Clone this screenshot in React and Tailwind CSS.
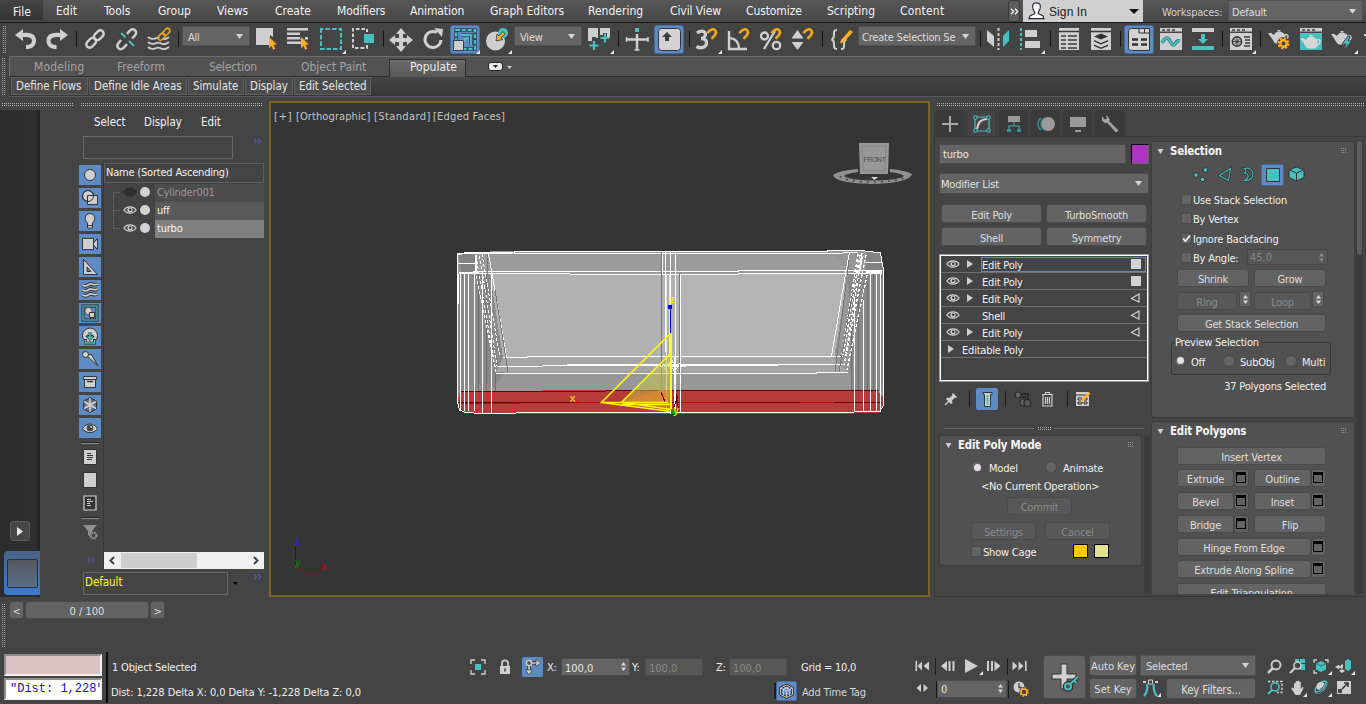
import React from "react";

const L = "#cfcfcf";
const T = "#49c0c0";
const O = "#fdb022";

/* ---------- primitives ---------- */
function Cell({ children, on, fly }) {
  return (
    <div className="flex h-[32px] w-[32px] shrink-0 items-center justify-center">
      <svg width="32" height="32" viewBox="0 0 32 32" fill="none">
        {on && <rect x="1.5" y="1.5" width="29" height="28" rx="2.5" fill="#5f8bc4" stroke="#47699a" />}
        {children}
        {fly && <path d="M31 26v4h-4z" fill="#e6e6e6" />}
      </svg>
    </div>
  );
}

function Ico({ w = 22, h = 20, children }) {
  return (
    <svg className="block shrink-0" width={w} height={h} viewBox={`0 0 ${w} ${h}`} fill="none">
      {children}
    </svg>
  );
}

const Sep = ({ className = "" }) => (
  <div className={"flex h-[32px] shrink-0 " + className}>
    <div className="mt-[7px] h-[16px] w-px bg-[#141414]" />
  </div>
);

const GripH = ({ className = "" }) => (
  <div className={"flex h-[3px] shrink-0 flex-col justify-between " + className}>
    <div className="h-px bg-[linear-gradient(90deg,#b0b0b0_50%,transparent_50%)] bg-[length:2px_1px]" />
    <div className="h-px bg-[linear-gradient(90deg,#b0b0b0_50%,transparent_50%)] bg-[length:2px_1px]" />
  </div>
);

const GripV = ({ className = "" }) => (
  <div className={"flex w-[3px] shrink-0 justify-between " + className}>
    <div className="w-px bg-[linear-gradient(180deg,#a8a8a8_50%,transparent_50%)] bg-[length:1px_2px]" />
    <div className="w-px bg-[linear-gradient(180deg,#a8a8a8_50%,transparent_50%)] bg-[length:1px_2px]" />
  </div>
);

const Down = ({ className = "" }) => (
  <svg className={"shrink-0 " + className} width="7" height="5" viewBox="0 0 7 5">
    <path d="M0 0h7L3.5 5z" fill="#d4d4d4" />
  </svg>
);

const Drop = ({ className = "", children }) => (
  <div className={"flex shrink-0 items-center justify-between border border-[#505050] bg-[#646464] text-[#dcdcdc] " + className}>
    <span className="pt-[2px]">{children}</span>
    <Down />
  </div>
);

const Btn = ({ className = "", off, tall, children }) => (
  <div
    className={
      "flex shrink-0 items-start justify-center rounded-[3px] border " +
      (tall ? "pt-[5px] " : "pt-[4px] ") +
      (off ? "border-[#4a4a4a] bg-[#585858] text-[#8a8a8a] " : "border-[#4a4a4a] bg-[#636363] text-[#dedede] ") +
      className
    }
  >
    {children}
  </div>
);

const Eye = ({ dim }) => (
  <svg className="shrink-0" width="14" height="10" viewBox="0 0 14 10" fill="none">
    {dim ? (
      <path d="M0 5C3-1 11-1 14 5 11 11 3 11 0 5z" fill="#2f2f2f" />
    ) : (
      <>
        <path d="M1 5C3.6 0.8 10.4 0.8 13 5 10.4 9.2 3.6 9.2 1 5z" stroke={L} strokeWidth="1.4" />
        <circle cx="7" cy="5" r="2.6" fill={L} />
        <circle cx="7.2" cy="4.8" r="1.2" fill="#333" />
      </>
    )}
  </svg>
);

const Spin = ({ dim }) => (
  <svg className="shrink-0" width="5" height="9" viewBox="0 0 5 9">
    <path d="M0 3.5L2.5 0 5 3.5zM0 5.5L2.5 9 5 5.5z" fill={dim ? "#8c8c8c" : "#dadada"} />
  </svg>
);

const Check = ({ on }) => (
  <div className="h-[11px] w-[11px] shrink-0 border border-[#4b4b4b] bg-[#636363]">
    {on && (
      <svg className="block" width="9" height="9" viewBox="0 0 9 9" fill="none">
        <path d="M1.2 4.5l2.2 2.7L8 1.6" stroke="#ededed" strokeWidth="1.8" />
      </svg>
    )}
  </div>
);

const Radio = ({ on }) => (
  <div className="flex h-[12px] w-[12px] shrink-0 items-center justify-center rounded-full border border-[#4a4a4a] bg-[#636363]">
    {on && <div className="h-[7px] w-[7px] rounded-full bg-[#e2e2e2]" />}
  </div>
);

const Opt = () => (
  <div className="flex h-[18px] w-[15px] shrink-0 items-center justify-center rounded-[3px] border border-[#4a4a4a] bg-[#636363]">
    <div className="mb-px ml-[-1px] h-[11px] w-[10px] border border-t-[3px] border-black" />
  </div>
);

const More = ({ className = "" }) => (
  <svg className={"shrink-0 " + className} width="9" height="6" viewBox="0 0 9 6" fill="none">
    <path d="M1 .5L3.5 3 1 5.5M5 .5L7.5 3 5 5.5" stroke="#57579a" strokeWidth="1.2" />
  </svg>
);

const Head = ({ children }) => (
  <div className="flex h-[20px] shrink-0 items-center pr-[7px]">
    <svg className="mr-[6px] mb-[2px] ml-[5px]" width="7" height="5" viewBox="0 0 7 5">
      <path d="M0.5 0h6L3.5 5z" fill="#cfcfcf" />
    </svg>
    <span className="flex-1 text-[11.4px] font-bold text-[#f4f4f4]">{children}</span>
    <svg className="mb-[4px]" width="6" height="5" viewBox="0 0 6 5" fill="#8e8e8e">
      <path d="M0 0h1v1H0zM2 0h1v1H2zM4 0h1v1H4zM0 2h1v1H0zM2 2h1v1H2zM4 2h1v1H4zM0 4h1v1H0zM2 4h1v1H2zM4 4h1v1H4z" />
    </svg>
  </div>
);

/* ---------- shared icon parts ---------- */
const Magnet = ({ x = 0, y = 0 }) => (
  <path transform={`translate(${x} ${y})`} d="M1.5 4.2C4-.2 8.200-.5 9.500 1.600 11 4.300 9 6.500 5.500 9.800" stroke="#f3a81c" strokeWidth="2.600" />
);
const Cursor = ({ x, y }) => (
  <path transform={`translate(${x} ${y})`} d="M0 0l8 7.500-3.600.3 1.900 4-2 .9-1.800-4L0 11.200z" fill={O} />
);
const Pot = ({ x = 0, y = 0, fill = L }) => (
  <g transform={`translate(${x} ${y})`}>
    <path d="M8 3.500c1-1 5-1 6.500 0l2 1.500c2 3 1.500 7-1 9.500h-8C5.500 13 4 9 1 5.500L0 4h3.500l2 2z" fill={fill} />
    <path d="M9.500 2.500h3v-1.500h-3z" fill={fill} />
    <path d="M16.500 6c4-2 5.500 3-.5 6" stroke={fill} strokeWidth="1.500" />
  </g>
);

/* ---------- menu bar ---------- */
function MenuBar() {
  return (
    <div className="flex h-[23px] shrink-0 border-b border-[#161616] bg-[linear-gradient(#575757,#474747)] text-[12px] text-[#f2f2f2]">
      <div className="h-[20px] w-[43px] bg-[linear-gradient(#454545,#343434)] pt-[6px] pl-[13px] tracking-normal">File</div>
      <div className="flex w-[965px] pt-[5px] pl-[13px] tracking-normal">
        <span className="w-[48px]">Edit</span>
        <span className="w-[54px]">Tools</span>
        <span className="w-[59px]">Group</span>
        <span className="w-[58px]">Views</span>
        <span className="w-[62px]">Create</span>
        <span className="w-[73px] tracking-[-.1px]">Modifiers</span>
        <span className="w-[80px] tracking-[-.1px]">Animation</span>
        <span className="w-[98px]">Graph Editors</span>
        <span className="w-[82px]">Rendering</span>
        <span className="w-[76px] tracking-[-.1px]">Civil View</span>
        <span className="w-[81px] tracking-[-.1px]">Customize</span>
        <span className="w-[73px]">Scripting</span>
        <span className="tracking-[.2px]">Content</span>
      </div>
      <div className="flex h-[22px] w-[12px] items-center justify-center rounded-[3px] border border-[#3a3a3a] bg-[#5c5c5c]">
        <svg width="9" height="7" viewBox="0 0 9 7" fill="none">
          <path d="M1 .7L3.600 3.500 1 6.300M5 .7L7.600 3.500 5 6.300" stroke="#fff" strokeWidth="1.300" />
        </svg>
      </div>
      <div className="ml-[3px] flex h-[22px] w-[120px] items-center bg-[#d0d0d0] font-['Liberation_Sans',sans-serif] text-[12px] tracking-[.1px] text-[#202020]">
        <svg className="ml-[5px]" width="17" height="18" viewBox="0 0 17 18">
          <path d="M5 2.500C6 .4 11 .4 12 2.500 12.800 5 12 8 10.300 10.200v1.500l4.500 2 1.200 3H1l1.200-3 4.500-2v-1.500C5 8 4.200 5 5 2.500z" fill="#fff" stroke="#26263a" strokeWidth="1.200" />
        </svg>
        <span className="ml-[4px] flex-1 pt-px">Sign In</span>
        <svg className="mr-[4px]" width="10" height="5" viewBox="0 0 10 5"><path d="M0 0h10L5 5z" fill="#111" /></svg>
      </div>
      <div className="flex-1 pt-[7px] pl-[19px] text-[11px] text-[#d0d0d0]">Workspaces:</div>
      <Drop className="mr-[3px] h-[21px] w-[135px] pt-px pr-[6px] pl-[3px] text-[11px]">Default</Drop>
    </div>
  );
}

/* ---------- main toolbar ---------- */
function Toolbar() {
  return (
    <div className="flex h-[33px] shrink-0 items-start bg-[#444] pt-px">
      <GripV className="mt-[2px] ml-[3px] h-[27px]" />
      <div className="w-[4px]" />
      <Cell><path d="M5 11L13 5v4c9-1 13 2 13 7.500 0 6-4 8.500-10 8.500v-4c4 0 6-1.500 6-4.300 0-3-3-4-9-3.700V17z" fill={L} /></Cell>
      <Cell><path d="M26 11L18 5v4C9 8 4.500 11 4.500 16.500c0 6 4 8.500 10 8.500v-4c-4 0-6-1.500-6-4.300 0-3 3.500-4 9.500-3.700V17z" fill={L} /></Cell>
      <Sep className="w-[5px] pl-[2px]" />
      <Cell>
        <g stroke={L} strokeWidth="2.400">
          <rect x="-5.500" y="-3.400" width="11" height="6.800" rx="3.400" transform="translate(19.800 11.200) rotate(-45)" />
          <rect x="-5.500" y="-3.400" width="11" height="6.800" rx="3.400" transform="translate(12.200 18.800) rotate(-45)" />
        </g>
      </Cell>
      <Cell>
        <g stroke={L} strokeWidth="2.400">
          <path d="M16 10l3-3.500c4-3 8 1 5 5L21 14.500M16 20l-3.500 4c-4 3-8-1-5-5L10 16" />
        </g>
        <path d="M10 9l4.500 4.500M18 17l5 5" stroke={T} strokeWidth="2" />
      </Cell>
      <Cell>
        <path d="M5 13c5 5 8-1 12 1s6 1 9-1M5 18c5 5 8-1 12 1s6 1 9-1M5 23c5 5 8-1 12 1s6 1 9-1" stroke={L} strokeWidth="1.900" />
        <g stroke="#444" strokeWidth="4"><path d="M17 16l9-10" /></g>
        <g stroke="#e7a02a" strokeWidth="1.700">
          <rect x="-3.800" y="-2.400" width="7.600" height="4.800" rx="2.400" transform="translate(23.500 7.800) rotate(-45)" />
          <rect x="-3.800" y="-2.400" width="7.600" height="4.800" rx="2.400" transform="translate(18.500 12.800) rotate(-45)" />
        </g>
      </Cell>
      <Sep className="w-[7px] pl-[3px]" />
      <Drop className="mt-[2px] h-[20px] w-[68px] pr-[6px] pl-[5px]">All</Drop>
      <div className="w-px" />
      <Cell><path d="M5 4h17v9l-3-2v10H5z" fill={L} /><Cursor x={18} y={13} /></Cell>
      <Cell>
        <path d="M4 4h21v2.500H4zM4 8.500h13v2.500H4zM4 13h21v2.500H4zM4 17.500h15v2.500H4z" fill={L} />
        <path d="M17 12h5v3h-5z" fill="#444" /><Cursor x={18} y={13} />
      </Cell>
      <Cell fly><rect x="6" y="5" width="20" height="20" stroke={T} strokeWidth="2" strokeDasharray="4.500 2" strokeDashoffset="2" /></Cell>
      <Cell>
        <path d="M17 24H6V5h14v3M20 21v3h-3" stroke={L} strokeWidth="2" strokeDasharray="3.500 2" />
        <path d="M17 10h10v9H17z" fill={T} />
      </Cell>
      <Sep className="w-[6px] pl-[4px]" />
      <Cell><path d="M16 4l5 6h-3v4h4v-3l6 5-6 5v-3h-4v4h3l-5 6-5-6h3v-4h-4v3l-6-5 6-5v3h4v-4h-3z" fill={L} /></Cell>
      <Cell><path d="M20 8.500A8 8 0 1 0 24 16" stroke={L} strokeWidth="3" /><path d="M17 4l9 1-1 8z" fill={L} /></Cell>
      <Cell on fly>
        <rect x="7" y="6" width="19" height="19" stroke="#31425a" strokeWidth="3.500" />
        <rect x="7" y="6" width="19" height="19" stroke={T} strokeWidth="2" strokeDasharray="4 1.800" />
        <path d="M12 11h10v10" stroke="#31425a" strokeWidth="3.500" /><path d="M12 11h10v10" stroke={T} strokeWidth="1.800" />
        <path d="M4.500 16.500h10v10h-10z" fill={L} stroke="#2d3b50" />
        <path d="M15 17l4-4" stroke={T} strokeWidth="2" />
      </Cell>
      <Cell fly>
        <circle cx="14.500" cy="17" r="9.500" fill={L} /><circle cx="22" cy="9" r="5" fill={T} />
        <path d="M22 7.500l-4 4.500-2-2-1 7 7-1.500-2-1.500 4-4z" fill={O} stroke="#333" strokeWidth=".8" />
      </Cell>
      <div className="w-px" />
      <Drop className="mt-[2px] h-[20px] w-[68px] pr-[6px] pl-[5px]">View</Drop>
      <div className="w-px" />
      <Cell fly>
        <path d="M5 4h10v10h-2v-1h-4v4H5zM17 4h10v9h-3V9h-4v2h-3z" fill={L} />
        <path d="M11 17v9M6.500 21.500h9M22 9.500v9M17.500 14h9" stroke={T} strokeWidth="2.200" />
      </Cell>
      <Sep className="w-[6px] pl-[3px]" />
      <Cell>
        <path d="M16 10v16M5 15.500h22" stroke={L} strokeWidth="2.400" /><path d="M5.500 13v5M27 13v5M13.500 26h5" stroke={L} strokeWidth="1.500" />
        <path d="M14 4h4v4h-4z" fill={T} />
      </Cell>
      <Cell on>
        <rect x="5.500" y="4.500" width="22" height="22" rx="3" fill="#d3d3d3" stroke="#2c3544" />
        <path d="M14 8l5 5h-3v4h-4v-4H9z" fill="#3c3c3c" />
      </Cell>
      <Sep className="w-[6px] pl-[4px]" />
      <Cell fly>
        <path d="M6 9c5-4 10-1 8 3-.6 1.500-2 2.500-4 2.500 4 0 6 2 5.500 5-.6 4-6 5.500-10 3" stroke={L} strokeWidth="3.300" />
        <Magnet x={15} y={5} />
      </Cell>
      <Cell>
        <path d="M6 7v18h18" stroke={L} strokeWidth="2.400" /><path d="M6 14c6 0 10 4 10 11" stroke={L} strokeWidth="2.200" /><Magnet x={15} y={5} />
      </Cell>
      <Cell>
        <circle cx="9.500" cy="12" r="3.500" stroke={L} strokeWidth="2.300" /><circle cx="21.500" cy="21.500" r="3.700" stroke={L} strokeWidth="2.300" />
        <path d="M9 25L20 7" stroke={L} strokeWidth="2.300" /><Magnet x={15} y={5} />
      </Cell>
      <Cell><path d="M10.500 6l6 8.500H4.500zM4.500 18h12l-6 8z" fill={L} /><Magnet x={15} y={5} /></Cell>
      <Sep className="w-[7px] pl-[3px]" />
      <Cell>
        <path d="M11 6C7.500 6 8 8 8 11s-.5 4-2.500 4.500C7.500 16 8 17.500 8 20s-.5 5 3 5M15 25c3.500 0 3-2 3-5s.5-4 2.500-4.500" stroke={L} strokeWidth="2" />
        <path d="M15 16l9-10 3 2-9 10-4 1.500z" fill={O} />
      </Cell>
      <Drop className="mt-[2px] h-[20px] w-[118px] pr-[6px] pl-[3px]">Create Selection Se</Drop>
      <Sep className="w-[6px] pl-[4px]" />
      <Cell>
        <path d="M5 6l7 6v11l-7-6z" fill={L} /><path d="M27 6l-6 6v11l6-6z" fill={T} /><path d="M16.500 4v22" stroke={L} strokeWidth="2" strokeDasharray="3 2" />
      </Cell>
      <Cell fly>
        <path d="M7 4v22" stroke={T} strokeWidth="2" strokeDasharray="3 2" /><path d="M11 6h12v7H11zM11 17h15v7H11z" fill={L} />
      </Cell>
      <Sep className="w-[7px] pl-[4px]" />
      <Cell>
        <path d="M6 4h20v22H6z" fill={L} />
        <path d="M6 7.500h20M8 12h5M15 12h9M8 16h5M15 16h9M8 20h5M15 20h9M8 24h5M15 24h9" stroke="#3a3a3a" strokeWidth="1.600" />
      </Cell>
      <Cell>
        <path d="M6 4h20v22H6z" fill={L} /><path d="M6 7.500h20" stroke="#3a3a3a" strokeWidth="1.600" />
        <path d="M16 9.500l7 3-7 3-7-3zM9 16l7 3 7-3v1.500l-7 3-7-3zM9 20.500l7 3 7-3V22l-7 3-7-3z" fill="#333" />
      </Cell>
      <Sep className="w-[6px] pl-[3px]" />
      <Cell on>
        <path d="M5.500 8c0-2 1-3.500 3-3.500h18v22H8.500c-2 0-3-1-3-3z" fill="#d3d3d3" stroke="#333" />
        <path d="M16 5v4h11M21.500 5v4" stroke="#333" /><path d="M9 15.500h6M18 15.500h6M9 20.500h6M18 20.500h6" stroke="#333" strokeWidth="2.600" />
      </Cell>
      <Cell>
        <path d="M5 4h22v3.500H5zM5 9h22v17H5z" fill={L} /><path d="M7 6h3M12 6h3M17 6h3" stroke="#3a3a3a" strokeWidth="1.600" />
        <path d="M7 19c3-6 6-6 8-2s4 5 5 3 2-4 5-3" stroke="#2d7f80" strokeWidth="3.400" /><path d="M7 19c3-6 6-6 8-2s4 5 5 3 2-4 5-3" stroke={T} strokeWidth="1.800" />
      </Cell>
      <Cell>
        <path d="M5 4h22v4H5z" fill={L} /><path d="M5 22h22v4H5zM14 10h4v5h3l-5 5-5-5h3z" fill={T} />
      </Cell>
      <Sep className="w-[6px] pl-[3px]" />
      <Cell fly>
        <path d="M5 4h22v3.500H5zM5 9h22v17H5z" fill={L} /><path d="M7 6h3M12 6h3M17 6h3M19 13h6M20 16h5M20 19h5M19 22h6" stroke="#3a3a3a" strokeWidth="1.600" />
        <circle cx="12" cy="17.500" r="4.600" stroke="#3a3a3a" strokeWidth="1.600" /><path d="M9 14.500l6 6M15 14.500l-6 6M12 13v9M7.500 17.500h9" stroke="#3a3a3a" />
      </Cell>
      <Sep className="w-[6px] pl-[3px]" />
      <Cell>
        <Pot x={5} y={5} />
        <circle cx="20.500" cy="19.500" r="6.500" fill="#444" /><circle cx="20.500" cy="19.500" r="5" stroke={O} strokeWidth="2" strokeDasharray="2.200 1.700" /><circle cx="20.500" cy="19.500" r="3.200" stroke={O} strokeWidth="2.400" />
      </Cell>
      <Cell><path d="M5 4h22v3.500H5z" fill={L} /><path d="M7 6h3M12 6h3M17 6h3" stroke="#3a3a3a" strokeWidth="1.600" /><path d="M5 9h22v17H5z" fill={T} /><Pot x={5} y={10} fill="#d6d6d6" /></Cell>
      <Cell fly><Pot x={4} y={6} /><path d="M21 12l-6 8h4l-2 6 8-9h-4l2-5z" fill={T} stroke="#444" /></Cell>
      <div className="mt-[10px] ml-[5px] h-[2px] w-[2px] bg-[#cfcfcf]" />
    </div>
  );
}

/* ---------- ribbon ---------- */
function Ribbon() {
  const b = "flex h-[18px] items-center border border-[#5e5e5e] bg-[#4b4b4b] pt-px text-[#e6e6e6] ";
  return (
    <div className="flex h-[44px] shrink-0 bg-[#444] tracking-normal">
      <GripV className="mt-[2px] ml-[2px] h-[37px]" />
      <div className="ml-[4px] flex flex-1 flex-col">
        <div className="flex h-[21px] border-t border-l border-[#6c6c6c] bg-[#525252] text-[12px] text-[#a2a2a2]">
          <div className="flex flex-1 border-b border-[#2c2c2c]">
            <div className="flex w-[379px] pt-[4px] pl-[24px]">
              <span className="w-[83px] tracking-[.15px]">Modeling</span>
              <span className="w-[92px]">Freeform</span>
              <span className="w-[92px] tracking-[-.2px]">Selection</span>
              <span>Object Paint</span>
            </div>
            <div className="mt-[2px] -mb-px w-[77px] border border-b-0 border-[#2f2f2f] bg-[linear-gradient(#6b6b6b,#575757)] pt-px pl-[20px] text-[#ececec]">Populate</div>
            <div className="mt-[5px] ml-[22px] flex h-[9px] w-[15px] items-center justify-center rounded-[3px] border border-[#222] bg-[#e8e8ee]">
              <svg width="5" height="3" viewBox="0 0 5 3"><path d="M0 0h5L2.500 3z" fill="#222" /></svg>
            </div>
            <svg className="mt-[9px] ml-[4px]" width="5" height="3" viewBox="0 0 5 3"><path d="M0 0h5L2.500 3z" fill="#ccc" /></svg>
          </div>
        </div>
        <div className="flex h-[20px] gap-px border-b border-[#5a5a5a] bg-[linear-gradient(#464646,#363636)] pl-[2px] text-[11.4px]">
          <div className={b + "w-[77px] pl-[4px]"}>Define Flows</div>
          <div className={b + "w-[98px] pl-[4px]"}>Define Idle Areas</div>
          <div className={b + "w-[56px] pl-[4px]"}>Simulate</div>
          <div className={b + "w-[48px] pl-[4px]"}>Display</div>
          <div className={b + "w-[77px] pl-[4px]"}>Edit Selected</div>
        </div>
      </div>
    </div>
  );
}

/* ---------- scene explorer ---------- */
const S = "#333";
const filters = [
  <circle cx="11" cy="10" r="5.500" fill={L} stroke={S} />,
  <g stroke={S}><circle cx="9" cy="8" r="5.500" fill={L} /><path d="M8.500 7.500h10v9h-10z" fill={L} /><circle cx="9" cy="8" r="5.500" /></g>,
  <path d="M8.500 12C5 9 5.500 3 11 2.500c5.500.5 6 6.500 2.500 9.500v5h-5zM8.500 14.500h5" fill={L} stroke={S} />,
  <path d="M3.500 4.500h11v11h-11zM14.500 9l4-4.500v11l-4-4.500z" fill={L} stroke={S} />,
  <g><path d="M4.500 2.500v15h14z" fill={L} stroke={S} /><path d="M8 10v4.500h4z" fill="#5f8bc4" stroke={S} /></g>,
  <g><path d="M3.500 5c5 3 6-2 9-1s4 1 6 0M3.500 10c5 3 6-2 9-1s4 1 6 0M3.500 15c5 3 6-2 9-1s4 1 6 0" stroke={S} strokeWidth="3.600" /><path d="M3.500 5c5 3 6-2 9-1s4 1 6 0M3.500 10c5 3 6-2 9-1s4 1 6 0M3.500 15c5 3 6-2 9-1s4 1 6 0" stroke={L} strokeWidth="1.800" /></g>,
  <g><rect x="4" y="3" width="14" height="14" fill="#5f8bc4" stroke={S} strokeWidth="3.200" /><rect x="4" y="3" width="14" height="14" stroke={T} strokeWidth="1.200" /><circle cx="9.500" cy="8" r="3.700" fill={L} stroke={S} strokeWidth=".8" /><path d="M10.500 9.500h5v5h-5z" fill={L} stroke={S} /></g>,
  <g><circle cx="11" cy="9.500" r="7.500" fill={L} stroke={S} /><path d="M11 6v6M7.500 9.500L11 13l3.500-3.500M6.500 13v4h9v-4" stroke={S} strokeWidth="3" /><path d="M11 6v6M8.500 10.500L11 13l2.500-2.500M6.500 14v3h9v-3" stroke={T} strokeWidth="1.600" /></g>,
  <g fill={L} stroke={S}><path d="M8 7l4-2 7 12z" /><circle cx="6.500" cy="5.500" r="3" /></g>,
  <g fill={L} stroke={S}><path d="M5.500 7.500h11v8h-11zM4.500 4.500h13v3h-13z" /><path d="M8 9.500h6" strokeWidth="1.500" /></g>,
  <g><path d="M11 2.500l6.500 3.700v7.600L11 17.500l-6.500-3.700V6.200z" stroke={S} fill="#5c6c82" /><path d="M11 3v14M5 6.500l12 7M17 6.500l-12 7" stroke={L} strokeWidth="1.500" /><circle cx="11" cy="10" r="3.400" stroke={L} strokeDasharray="2 1.500" /></g>,
  <g><path d="M3.500 10.500c4-6 11-6 15 0-4 5.500-11 5.500-15 0z" fill={L} stroke={S} /><circle cx="11" cy="10" r="3.300" fill="#444" /><circle cx="12" cy="9" r="1" fill={L} /></g>,
];

function Explorer() {
  return (
    <div className="flex h-[487px] w-[185px] flex-col text-[#f2f2f2]">
      <div className="flex h-[26px] pt-[7px] pl-[15px] text-[11.4px] tracking-normal">
        <span className="w-[50px]">Select</span>
        <span className="w-[57px]">Display</span>
        <span>Edit</span>
      </div>
      <div className="flex h-[26px] pl-[4px]">
        <div className="h-[23px] w-[150px] border border-[#686868]" />
        <More className="mt-[2px] ml-[20px]" />
      </div>
      <div className="flex h-[408px]">
        <div className="flex w-[24px] flex-col">
          <div className="mt-[3px] flex flex-col gap-[3px]">
            {filters.map((f, i) => (
              <div key={i} className="h-[20px] w-[22px] bg-[#5f8bc4]"><Ico>{f}</Ico></div>
            ))}
          </div>
          <div className="mt-[4px] ml-[2px] h-[2px] w-[18px] border-t border-[#262626] bg-[#8a8a8a]" />
          <div className="mt-[3px] flex flex-col gap-[3px]">
            <Ico><path d="M4.500 2.500h13v15h-13z" fill={L} stroke={S} /><path d="M8 6.500h4M8 8.500h6M8 10.500h6M8 12.500h5" stroke={S} /></Ico>
            <Ico><path d="M4.500 2.500h13v15h-13z" fill={L} stroke={S} /></Ico>
            <Ico><path d="M5 3h12v14H5z" fill={S} stroke={L} strokeWidth="1.200" /><path d="M8 6.500h4M8 8.500h6M8 10.500h3M8 12.500h4" stroke={L} /></Ico>
          </div>
          <div className="mt-[4px] ml-[2px] h-[2px] w-[18px] border-t border-[#262626] bg-[#8a8a8a]" />
          <div className="mt-[3px]">
            <Ico><path d="M4 3h14l-5 6v7l-4-3V9z" fill="#8f8f8f" /><circle cx="14.500" cy="13.500" r="3" fill="#444" stroke="#8f8f8f" strokeWidth="2" strokeDasharray="1.600 .8" /><circle cx="14.500" cy="13.500" r="2.300" fill="#444" stroke="#8f8f8f" /></Ico>
          </div>
          <More className="mt-[15px] ml-[8px]" />
        </div>
        <div className="flex w-[161px] flex-col border-l border-[#383838]">
          <div className="mt-px flex h-[20px] items-start border border-[#5c5c5c] pt-[3px] pl-px text-[#f2f2f2]">Name (Sorted Ascending)</div>
          <div className="flex h-[369px]">
            <div className="flex w-[51px] shrink-0">
              <svg width="16" height="60" viewBox="0 0 16 60" fill="none"><path d="M9.500 10v36M9.500 9.500h7M9.500 27.500h7M9.500 45.500h7" stroke="#777" strokeDasharray="1 1" /></svg>
              <div className="flex flex-col">
                {[1, 0, 0].map((d, i) => (
                  <div key={i} className="flex h-[18px] items-center gap-[3px] pl-[3px]">
                    <Eye dim={!!d} />
                    <div className="h-[10px] w-[10px] rounded-full bg-[#d2d2d2]" />
                  </div>
                ))}
              </div>
            </div>
            <div className="flex flex-1 flex-col pt-px">
              <div className="h-[18px] bg-[#4d4d4d] pt-[3px] pl-[2px] text-[#959595]">Cylinder001</div>
              <div className="h-[18px] bg-[#5a5a5a] pt-[3px] pl-[2px]">uff</div>
              <div className="h-[18px] bg-[#808080] pt-[3px] pl-[2px]">turbo</div>
            </div>
          </div>
          <div className="flex h-[17px] items-center bg-[#f0f0f0]">
            <svg width="17" height="17" viewBox="0 0 17 17" fill="none"><path d="M10 5L6.500 8.500 10 12" stroke="#444" strokeWidth="2" /></svg>
            <div className="h-[15px] w-[76px] bg-[#cdcdcd]" />
            <div className="flex-1" />
            <svg width="17" height="17" viewBox="0 0 17 17" fill="none"><path d="M7 5l3.500 3.500L7 12" stroke="#444" strokeWidth="2" /></svg>
          </div>
        </div>
      </div>
      <div className="flex h-[27px] pt-[2px] pl-[4px]">
        <div className="h-[23px] w-[145px] border border-[#686868] pt-[4px] pl-px text-[11.4px] tracking-normal text-[#ffff10]">Default</div>
        <svg className="mt-[10px] ml-[5px]" width="5" height="3" viewBox="0 0 5 3"><path d="M0 0h5L2.500 3z" fill="#000" /></svg>
        <More className="mt-[2px] ml-[15px]" />
      </div>
    </div>
  );
}

/* ---------- viewport ---------- */
function Scene() {
  const leftX = [460.5, 464.5, 468.5, 474.5, 482.5, 491.5];
  const rightX = [854.5, 863.5, 870.5, 876.5, 880.5];
  return (
    <svg width="657" height="492" viewBox="271 103 657 492" fill="none" shapeRendering="crispEdges">
      <path d="M458 254l9-2 47-1h316l30-1 19 2 4 20v134l-5 6-50 1H516l-50-1-8-8z" fill="#979797" />
      <path d="M514 252h318l15 20-370 1-2-20z" fill="#9b9b9b" />
      <path d="M458 274h35l12 98-13 18h-34z" fill="#8a8a8a" />
      <path d="M848 274h35v116h-32z" fill="#8a8a8a" />
      <path d="M490 274h358l-14 84H503z" fill="#b1b1b1" />
      <path d="M676 274h172l-14 84H676z" fill="#b4b4b4" />
      <path d="M503 358h331l13 14H496z" fill="#a6a6a6" />
      <path d="M459 254h17v19h-15z" fill="#828282" /><path d="M866 252h14l3 18h-17z" fill="#828282" />
      <path d="M478 391V274M486.500 391V274M495 391V370M851 391V330M858 391V300M867 391V274M873 391V274" stroke="#707070" />
      <path d="M478 391h-18l-2 8 2 8 5 6 50 1h314l50-1 4-8v-9l-6-5-50-1H606z" fill="#b83b3b" />
      <path d="M460 392l30-1h116l1-1h246l26 1" stroke="#6d0000" />
      <path d="M458 402.500h424" stroke="#6d0000" /><path d="M460 403h60M576 402.500h25M720 402.500h-40M800 402.500h34" stroke="#c00808" />
      <g stroke="#fff">
        {leftX.map((x) => <path key={x} d={`M${x} 274v${x > 480 ? 139 : 137}`} />)}
        {rightX.map((x) => <path key={x} d={`M${x} ${x > 870 ? 274 : 300}V412`} />)}
        <path d="M457.500 254v148l2 8 6 2.500 17 1h33l1-1h313l50-1 4-6V270l-3-17-20-2.500h-33v1H514v1h-47z" />
        <path d="M458 254.500l8-1 48-.5M514 253.500h314l30-1M473 271.500h265v-1h144M470 273.500l200 1h68v-1h144" />
        <path d="M458 263.500h18M866 262.500h16" />
        <path d="M459 272.500h20M866 271.500h16" strokeWidth="2" />
        <path d="M503 357.500h24v-1h316" /><path d="M497 367l70-1.500 100-1h112l64 .5" /><path d="M567 365h211" strokeWidth="1.500" />
        <path d="M495.500 373.500h321v-1h31" />
        <path d="M488.500 254l4 22 14 81M849.500 252l-4 22-14 82" />
        <path d="M662.500 252v22M665.500 252v100M670.500 252v162M675.500 252v162M680.500 274v139M674.500 356v57" />
        <path d="M669.500 274v80M666.500 274v139" stroke="#e6e6e6" />
      </g>
      <g stroke="#fff" strokeDasharray="3 2">
        <path d="M479 256l4 20 14 90M482 254l18 104M476 256l20 117M476 276l20 95" /><path d="M862 253l-16 100M860 255l-17 100M866 255l-22 110M858 254l-16 100M868 270l-21 100" strokeWidth="1.500" />
      </g>
      <path d="M487 254v20M495 290l13 82M661.500 252v140M679.500 274v100M849 260l-14 112M853 290l-14 82" stroke="#777" />
      <path d="M476 255v18M862 256l-3 18M458 274v30" stroke="#fff" strokeWidth="2" />
      <path d="M660 366h26M665 370l4-8 6 10M672 360l4 10 4-8M662 373h20" stroke="#fff" strokeDasharray="3 1" />
      <path d="M622 402l48-45v46z" fill="#c9c94a" opacity=".5" /><path d="M622 402l38-12h11v19z" fill="#e18a28" opacity=".65" />
      <path d="M661 392l4 10M676 394l3 18M678 396l-5 14" stroke="#6d0000" />
      <path d="M670.500 307v26" stroke="#0000d0" /><path d="M668 305h4v4h-4z" fill="#0000d0" />
      <path d="M670.500 333.500l-69 69 70 9M670.500 353.500l-49 49 50 7M602 402.500h66M622 404.500h48" stroke="#ff0" strokeWidth="1.500" shapeRendering="auto" />
      <path d="M671 334v76" stroke="#ff0" strokeWidth="2" />
      <path d="M575 401h2v2h-2z" fill="#d00" /><path d="M671 409h5v5h-5z" fill="#0a9a0a" />
      <g shapeRendering="auto" fontFamily="Liberation Sans, sans-serif" fontSize="11" fontWeight="bold">
        <text x="569.500" y="402" fill="#e0c800">x</text><text x="669.500" y="303" fill="#f2f200">z</text><text x="673" y="414" fill="#c8d800">y</text>
      </g>
      {/* world axis tripod */}
      <path d="M295.500 546v24" stroke="#1010a0" /><path d="M296 569.500h26" stroke="#7a1010" /><path d="M295 565h2v4h-2z" fill="#0d6a0d" />
      <g shapeRendering="auto" fontFamily="Liberation Sans, sans-serif" fontSize="10" fontWeight="bold">
        <text x="295" y="545" fill="#2424e0">z</text><text x="321" y="570" fill="#a81010">x</text><text x="295" y="566" fill="#107010">y</text>
      </g>
      {/* view cube */}
      <g shapeRendering="auto">
        <path d="M833 175a39 9 0 0 1 25-6v3a33 6 0 0 0-14 4c6 6 54 6 60 0a33 6 0 0 0-14-4v-3a39 9 0 0 1 22 5c-2 13-77 13-79 1z" fill="#9b9b9b" opacity=".9" />
        <path d="M840 176c4 8 62 8 66 0" stroke="#454545" strokeWidth="1.500" strokeDasharray="2 5" />
        <path d="M859 143h30l-1 31h-28z" fill="#989898" /><path d="M862 146h24l-1 25h-22z" stroke="#868686" />
        <path d="M871 177h7l-3.500 3z" fill="#ddd" />
        <text x="863.500" y="161.500" fontSize="7" fontFamily="Liberation Sans, sans-serif" fill="#505050" textLength="22">FRONT</text>
      </g>
    </svg>
  );
}

function Viewport() {
  return (
    <div className="relative mt-px ml-px h-[496px] w-[661px] shrink-0 border-2 border-[#7c6420] bg-[#353535]">
      <Scene />
      <div className="absolute top-[8px] left-[3px] flex text-[11px] tracking-[.1px] text-[#c4c4c4]">
        <span className="w-[22px] tracking-[.8px]">[+]</span>
        <span className="w-[78px]">[Orthographic]</span>
        <span className="w-[59px] tracking-[.4px]">[Standard]</span>
        <span className="tracking-[.2px]">[Edged Faces]</span>
      </div>
    </div>
  );
}

/* ---------- command panel ---------- */
const TabI = ({ on, children }) => (
  <div className={"mr-px flex h-[27px] w-[31px] items-center justify-center rounded-t-[4px] border border-b-0 " + (on ? "border-[#383838] bg-[#444]" : "border-[#3c3c3c] bg-[#3a3a3a]")}>
    <Ico w={22} h={22}>{children}</Ico>
  </div>
);

const Row = ({ hi, noeye, arrow, mark, children }) => (
  <div className="flex h-[17px] items-center border-b border-[#6e6e6e]">
    {noeye ? <div className="w-[5px]" /> : <div className="flex w-[24px] justify-center"><Eye /></div>}
    <div className="w-[16px] pl-[2px]">
      {arrow && <svg width="6" height="8" viewBox="0 0 6 8"><path d="M0 0l6 4-6 4z" fill={L} /></svg>}
    </div>
    <div className={"mt-px flex h-[15px] flex-1 items-start justify-between self-start " + (hi ? "mr-px border border-[#5f8bc4] pt-[2px] pr-[4px]" : noeye ? "mr-[2px] pt-[3px] pr-[4px]" : "mr-[2px] pt-[3px] pr-[4px] pl-px")}>
      <span>{children}</span>
      {mark === "sq" && <div className="-mt-px h-[10px] w-[10px] bg-[#d2d2d2]" />}
      {mark === "tri" && <svg className="-mt-px" width="11" height="11" viewBox="0 0 11 11" fill="none"><path d="M9 1v8L1.500 5.500z" stroke={L} strokeWidth="1.200" /></svg>}
    </div>
  </div>
);

function ModifyColumn() {
  const bar = "h-[16px] w-px bg-[#1c1c1c]";
  return (
    <div className="flex w-[216px] flex-col">
      <div className="mt-[7px] ml-[4px] flex">
        <div className="flex h-[20px] w-[187px] items-center border border-[#4c4c4c] bg-[#646464] pt-px pl-[3px] text-[#e4e4e4]">turbo</div>
        <div className="ml-[5px] h-[20px] w-[18px] border border-black border-r-[#666] border-b-[#666] bg-[#ae34c4]" />
      </div>
      <div className="mt-[9px] ml-[4px] flex h-[21px] w-[210px] items-center justify-between border border-[#4c4c4c] bg-[#646464] pr-[6px] pl-px text-[#e0e0e0]"><span className="pt-px">Modifier List</span><Down /></div>
      <div className="mt-[10px] ml-[6px] grid grid-cols-[101px_101px] gap-x-[4px] gap-y-[4px]">
        <Btn tall className="h-[19px]">Edit Poly</Btn>
        <Btn tall className="h-[19px]">TurboSmooth</Btn>
        <Btn tall className="h-[19px]">Shell</Btn>
        <Btn tall className="h-[19px]">Symmetry</Btn>
      </div>
      <div className="mt-[8px] ml-[4px] h-[128px] w-[210px] border border-[#9a9aa2] text-[#f2f2f2]">
        <div className="h-[126px] border border-white">
          <Row hi arrow mark="sq">Edit Poly</Row>
          <Row arrow mark="sq">Edit Poly</Row>
          <Row arrow mark="tri">Edit Poly</Row>
          <Row mark="tri">Shell</Row>
          <Row arrow mark="tri">Edit Poly</Row>
          <Row noeye arrow>Editable Poly</Row>
        </div>
      </div>
      <div className="mt-[6px] flex h-[22px] items-center pl-[5px]">
        <Ico w={22} h={22}><path d="M13 5l4 4-1 1-1-.5-3 3 .5 2.500-1.500 1-5-5 1-1.500 2.500.5 3-3L12 6z" fill={L} /><path d="M9 13l-4 4" stroke={L} strokeWidth="1.300" /></Ico>
        <div className={bar + " ml-[7px]"} />
        <div className="ml-[6px] h-[22px] w-[22px] rounded-[2px] bg-[#5f8bc4]"><Ico w={22} h={22}><path d="M7 4.500h9v2h-1.500v12h-6v-12H7z" fill={L} stroke={S} /><path d="M10.500 7h2v10h-2z" fill={T} /></Ico></div>
        <div className={bar + " ml-[7px]"} />
        <div className="ml-[6px] w-[24px]"><Ico w={24} h={22}><g stroke="#2b2b2b" strokeWidth="1.200"><circle cx="6" cy="7" r="3" fill="#666" /><circle cx="11.500" cy="14.500" r="3.500" fill="#5c5c5c" /><circle cx="15.500" cy="15" r="3.500" fill="#555" /><path d="M9 6h7v5M10 9h4" strokeWidth="2" /></g></Ico></div>
        <Ico w={24} h={22}><path d="M7 7v11h9V7M6 6.500h11M9.500 6V4.500h4V6M9.500 9v7M11.500 9v7M13.500 9v7" stroke={L} strokeWidth="1.200" /></Ico>
        <div className={bar + " ml-[7px]"} />
        <div className="ml-[4px]"><Ico w={22} h={22}><path d="M4 4h13v14H4z" fill={L} /><path d="M4 7h13M6 10h4v2H6zM12 10h3v2h-3zM6 14h4v2H6zM12 14h3v2h-3z" stroke={S} /><path d="M9 12l7-8 2.500 1.500-7 7.500-3 1z" fill={O} /></Ico></div>
      </div>
      <div className="mt-[15px] flex h-[7px] items-center justify-between pr-[7px] pl-[9px]">
        <div className="h-px w-[90px] bg-[#686868]" />
        <GripH className="w-[13px]" />
        <div className="h-px w-[90px] bg-[#686868]" />
      </div>
      <div className="mt-[3px] flex">
        <div className="ml-[4px] flex h-[131px] w-[203px] flex-col rounded-[3px] border border-[#3d3d3d] bg-[#515151] text-[#f0f0f0]">
          <Head>Edit Poly Mode</Head>
          <div className="flex h-[22px] items-center pl-[31px]">
            <Radio on /><span className="mt-[3px] ml-[6px] w-[56px]">Model</span>
            <Radio /><span className="mt-[3px] ml-[6px]">Animate</span>
          </div>
          <div className="h-[19px] pt-[3px] pl-[41px]">&lt;No Current Operation&gt;</div>
          <Btn off className="ml-[67px] h-[18px] w-[65px]">Commit</Btn>
          <div className="mt-[7px] flex gap-[9px] pl-[31px]">
            <Btn off className="h-[18px] w-[65px]">Settings</Btn>
            <Btn off className="h-[18px] w-[65px]">Cancel</Btn>
          </div>
          <div className="mt-[3px] flex h-[16px] items-center pl-[31px]">
            <Check /><span className="ml-px w-[90px] pt-[2px]">Show Cage</span>
            <div className="h-[14px] w-[15px] border border-black bg-[#ffc800]" />
            <div className="ml-[6px] h-[14px] w-[15px] border border-black bg-[#e4e48c]" />
          </div>
        </div>
        <div className="ml-[2px] h-[158px] w-[6px] rounded-full bg-[#3b3b3b]" />
      </div>
    </div>
  );
}

function SelectionRollout() {
  return (
    <div className="flex h-[277px] w-[204px] flex-col rounded-[3px] border border-[#3d3d3d] bg-[#515151] text-[#f0f0f0]">
      <Head>Selection</Head>
      <div className="mt-px flex h-[23px] items-center pl-[38px]">
        <Ico w={24} h={22}><g fill={T} stroke={S}><circle cx="6" cy="11" r="2.300" /><circle cx="15.500" cy="6" r="2.300" /><circle cx="12.500" cy="15.500" r="2.300" /></g></Ico>
        <Ico w={24} h={22}><path d="M16.500 4.500l-2 12-9-5z" stroke={S} strokeWidth="2.600" /><path d="M16.500 4.500l-2 12-9-5z" stroke="#3fb0b0" strokeWidth="1.200" /></Ico>
        <Ico w={24} h={22}><path d="M6 4.500c12-3 12 14 0 12 6-2 5-8 0-7.500 3-1.500 2-3.500 0-4.500z" stroke={S} strokeWidth="2.600" /><path d="M6 4.500c12-3 12 14 0 12 6-2 5-8 0-7.500 3-1.500 2-3.500 0-4.500z" stroke="#3fb0b0" strokeWidth="1.200" /></Ico>
        <div className="-ml-px h-[22px] w-[23px] rounded-[2px] border border-[#47699a] bg-[#5f8bc4]"><Ico w={21} h={20}><path d="M4.500 3.500h13v13h-13z" fill={T} stroke={S} /></Ico></div>
        <Ico w={24} h={22}><path d="M12.500 3l7.500 3v7.500L12.500 17 5 13.500V6z" fill={T} stroke={S} /><path d="M5.500 6l7 3 7-3M12.500 9v8" stroke={S} /></Ico>
      </div>
      <div className="mt-px flex h-[78px] flex-col justify-between pt-[2px] pl-[29px]">
        <div className="flex h-[17px] items-center gap-px pt-[4px]"><Check /><span className="pt-px">Use Stack Selection</span></div>
        <div className="flex h-[17px] items-center gap-px pt-[3px]"><Check /><span className="pt-[2px]">By Vertex</span></div>
        <div className="flex h-[17px] items-center gap-px pt-[3px]"><Check on /><span className="pt-[2px]">Ignore Backfacing</span></div>
        <div className="flex h-[17px] items-center gap-px pt-[2px]">
          <Check /><span className="w-[53px] pt-[2px]">By Angle:</span>
          <div className="flex h-[16px] w-[81px] items-center justify-between border border-[#474747] bg-[#575757] pr-[3px] pl-[2px] tracking-normal text-[#858585]"><span>45,0</span><Spin dim /></div>
        </div>
      </div>
      <div className="mt-[4px] flex gap-[5px] pl-[25px]"><Btn className="h-[18px] w-[72px]">Shrink</Btn><Btn className="h-[18px] w-[72px]">Grow</Btn></div>
      <div className="mt-[4px] flex items-start pl-[25px]">
        <Btn off className="mt-px h-[18px] w-[60px]">Ring</Btn>
        <div className="ml-[2px] flex h-[16px] w-[12px] items-center justify-center border border-[#4a4a4a] bg-[#636363]"><Spin /></div>
        <Btn off className="mt-px ml-[3px] h-[18px] w-[57px]">Loop</Btn>
        <div className="ml-px flex h-[16px] w-[12px] items-center justify-center border border-[#4a4a4a] bg-[#636363]"><Spin /></div>
      </div>
      <Btn className="mt-[4px] ml-[25px] h-[18px] w-[149px]">Get Stack Selection</Btn>
      <fieldset className="mt-[4px] ml-[19px] h-[39px] w-[160px] rounded-[2px] border border-[#393939] pl-[2px]">
        <legend className="ml-px h-[12px] leading-[14px]">Preview Selection</legend>
        <div className="flex items-center pt-[5px]">
          <Radio on /><span className="mt-[4px] ml-[5px] w-[32px]">Off</span>
          <Radio /><span className="mt-[4px] ml-[5px] w-[45px]">SubObj</span>
          <Radio /><span className="mt-[4px] ml-[5px]">Multi</span>
        </div>
      </fieldset>
      <div className="mt-[6px] pr-[28px] text-right">37 Polygons Selected</div>
    </div>
  );
}

function PolygonsRollout() {
  return (
    <div className="mt-[3px] flex h-[173px] w-[204px] flex-col overflow-hidden rounded-t-[3px] border border-b-0 border-[#3d3d3d] bg-[#515151] text-[#f0f0f0]">
      <Head>Edit Polygons</Head>
      <div className="mt-[5px] flex flex-col pl-[25px]">
        <Btn className="h-[18px] w-[149px]">Insert Vertex</Btn>
        <div className="mt-[4px] flex h-[18px]"><Btn className="w-[57px]">Extrude</Btn><Opt /><div className="w-[5px]" /><Btn className="w-[57px]">Outline</Btn><Opt /></div>
        <div className="mt-[5px] flex h-[18px]"><Btn className="w-[57px]">Bevel</Btn><Opt /><div className="w-[5px]" /><Btn className="w-[57px]">Inset</Btn><Opt /></div>
        <div className="mt-[5px] flex h-[18px]"><Btn className="w-[57px]">Bridge</Btn><Opt /><div className="w-[5px]" /><Btn className="w-[72px]">Flip</Btn></div>
        <div className="mt-[5px] flex h-[18px]"><Btn className="w-[134px]">Hinge From Edge</Btn><Opt /></div>
        <div className="mt-[4px] flex h-[18px]"><Btn className="w-[134px]">Extrude Along Spline</Btn><Opt /></div>
        <Btn className="mt-[5px] h-[18px] w-[149px]">Edit Triangulation</Btn>
      </div>
    </div>
  );
}

function CommandPanel() {
  return (
    <div className="ml-[4px] flex w-[432px] flex-col">
      <div className="h-[10px] pt-[3px] pl-[3px]"><GripH className="w-[427px]" /></div>
      <div className="flex h-[26px]">
        <TabI><path d="M11 3v16M3 11h16" stroke="#a6a6a6" strokeWidth="2" /></TabI>
        <TabI on>
          <path d="M4 4h14v14H4z" stroke={T} strokeWidth="1.200" /><path d="M6 16C7 9 10 6 16 6" stroke={L} strokeWidth="2.200" />
          <path d="M3 3h3v3H3zM16 3h3v3h-3zM3 16h3v3H3zM16 16h3v3h-3z" fill="#333" stroke={T} />
        </TabI>
        <TabI><path d="M5 3h12v6H5z" fill="#9a9a9a" /><path d="M11 9v4M6 16v-3h10v3" stroke="#3e8f8f" strokeWidth="1.500" /><path d="M4 16h4v3H4zM14 16h4v3h-4z" fill="#3e8f8f" /></TabI>
        <TabI><circle cx="13" cy="11" r="7" fill="#9a9a9a" /><path d="M6 5c-4 3-4 9 0 12M9 5c-4 3-4 9 0 12" stroke="#3e8f8f" strokeWidth="1.300" /></TabI>
        <TabI><path d="M3 4h16v10H3zM8 17h6v2H8z" fill="#9a9a9a" /></TabI>
        <TabI><path d="M9 4L7 7 4.500 6.500 3.500 4C2.500 9 6 10 8.500 9.500L17 19l2-1.500-9-9C10.500 6 10 5 7 3z" fill="#a6a6a6" stroke="#a6a6a6" /></TabI>
      </div>
      <div className="flex h-[461px] w-[431px] border border-r-0 border-[#383838]">
        <ModifyColumn />
        <div className="mt-[4px] flex w-[204px] flex-col">
          <SelectionRollout />
          <PolygonsRollout />
        </div>
        <div className="mt-[3px] ml-px h-[454px] w-[7px] rounded-full bg-[#3a3a3a] px-px pt-px">
          <div className="h-[114px] rounded-full bg-[#5c5c5c]" />
        </div>
      </div>
    </div>
  );
}

/* ---------- bottom ---------- */
function Timeline() {
  return (
    <div className="flex h-[55px] shrink-0 items-start pt-[4px]">
      <GripV className="mt-[3px] ml-[2px] h-[43px]" />
      <Btn className="ml-[4px] h-[18px] w-[15px]">&lt;</Btn>
      <Btn className="ml-px h-[18px] w-[124px] tracking-normal">0 / 100</Btn>
      <Btn className="ml-px h-[18px] w-[15px]">&gt;</Btn>
    </div>
  );
}

const Field = ({ className = "", off, children }) => (
  <div className={"flex h-[18px] items-center justify-between border border-[#4c4c4c] pt-[2px] pr-[3px] pl-[3px] tracking-normal " + (off ? "bg-[#575757] text-[#8a8a8a] " : "bg-[#646464] text-[#e6e6e6] ") + className}>
    <span>{children}</span>
    {!off && <div className="-mt-[3px]"><Spin /></div>}
  </div>
);

function StatusBar() {
  const bar = "h-[17px] w-px shrink-0 bg-[#1c1c1c]";
  return (
    <div className="flex h-[52px] shrink-0 text-[#f0f0f0]">
      <div className="flex w-[105px] flex-col pt-[2px] pl-[4px]">
        <div className="h-[22px] w-[98px] border-2 border-t-[#8d8d8d] border-r-[#f5f5f5] border-b-[#f5f5f5] border-l-[#8d8d8d] bg-[#dcc2c2]" />
        <div className="mt-[2px] h-[22px] w-[98px] overflow-hidden border-2 border-t-[#8d8d8d] border-r-[#f5f5f5] border-b-[#f5f5f5] border-l-[#8d8d8d] bg-white pt-[3px] pl-[4px] font-['Liberation_Mono',monospace] text-[12px] tracking-normal text-[#1010e0]">"Dist: 1,228"</div>
      </div>
      <div className="h-[51px] w-[3px] shrink-0 border-r-2 border-[#0c0c0c]" />
      <div className="flex w-[357px] shrink-0 flex-col pt-[10px] pl-[4px]">
        <div className="h-[25px]">1 Object Selected</div>
        <div className="-ml-px tracking-[-.06px]">Dist: 1,228 Delta X: 0,0 Delta Y: -1,228 Delta Z: 0,0</div>
      </div>
      <div className="flex w-[450px] shrink-0 flex-col">
        <div className="flex h-[28px] items-center pt-[2px]">
          <div className="w-[27px] pl-[2px]"><Ico w={22} h={22}><path d="M4 8V4h4M14 4h4v4M18 14v4h-4M8 18H4v-4" stroke={L} strokeWidth="1.300" /><path d="M8 8h6v6H8z" fill={T} /></Ico></div>
          <div className="w-[30px] pl-[2px]"><Ico w={22} h={22}><path d="M6 10h10v8H6z" fill={L} /><path d="M8 10V7c0-3.500 6-3.500 6 0v3" stroke={L} strokeWidth="1.800" /><path d="M10.300 12.500h1.500v3h-1.500z" fill="#333" /></Ico></div>
          <div className="h-[20px] w-[21px] rounded-[2px] bg-[#5f8bc4]"><Ico w={21} h={20}><path d="M7 6v11M7 6h10" stroke={S} strokeWidth="3.400" /><path d="M7 6v10M7 6h9" stroke={L} strokeWidth="1.600" /><circle cx="7" cy="6" r="2.600" fill="#555" stroke={L} strokeWidth="1.400" /><path d="M14 2.500l5 3.500-5 3.500zM3.500 13h7L7 18z" fill={L} stroke={S} strokeWidth=".6" /></Ico></div>
          <span className="ml-[4px] w-[14px] shrink-0 pt-px">X:</span>
          <Field className="w-[69px] shrink-0">100,0</Field>
          <span className="ml-[2px] w-[13px] shrink-0 pt-px">Y:</span>
          <Field off className="w-[58px] shrink-0">100,0</Field>
          <span className="ml-[13px] w-[13px] shrink-0 pt-px">Z:</span>
          <Field off className="w-[58px] shrink-0">100,0</Field>
          <span className="ml-[14px] pt-px">Grid = 10,0</span>
        </div>
        <div className="flex h-[22px] items-center pl-[309px]">
          <div className="h-[16px] w-[2px] bg-[#1c1c1c]" />
          <div className="h-[20px] w-[21px] rounded-[2px] border border-[#47699a] bg-[#5f8bc4]"><Ico w={19} h={18}><path d="M9.500 3l6 3v6.500l-6 3-6-3V6z" stroke={S} strokeWidth="2.600" /><path d="M9.500 3l6 3v6.500l-6 3-6-3V6zM3.500 6l6 3 6-3M9.500 9v6M6.500 4.500l6 3v6M12.500 4.500l-6 3v6" stroke={L} strokeWidth=".9" /></Ico></div>
          <span className="ml-[5px] pt-[2px] text-[#d6d6d6]">Add Time Tag</span>
        </div>
      </div>
      <div className="flex w-[128px] shrink-0 flex-col">
        <div className="flex h-[26px] items-center pt-[2px]">
          <Ico w={18} h={20}><path d="M4.500 5h1.600v10H4.500zM11 5.500v9L6.500 10zM18 5.500v9L12.500 10z" transform="translate(-4 0)" fill={L} /></Ico>
          <div className={bar + " ml-[2px]"} />
          <Ico w={24} h={20}><path d="M11 5v10l-6-5zM12.500 5h2v10h-2zM16.500 5h2v10h-2z" fill={L} /></Ico>
          <Ico w={24} h={20}><path d="M5 3l13 7-13 7z" fill={L} /><path d="M23 15v4h-4z" fill="#e6e6e6" /></Ico>
          <Ico w={24} h={20}><path d="M3 5h2v10H3zM7 5h2v10H7zM10.500 5v10l6-5z" fill={L} /></Ico>
          <div className={bar + " -ml-px"} />
          <Ico w={22} h={20}><path d="M4.500 5.500v9l5-4.500zM10.500 5.500v9l5-4.500zM17 5h1.600v10H17z" fill={L} /></Ico>
        </div>
        <div className="flex h-[22px] items-center">
          <Ico w={18} h={20}><path d="M6 5v8L1.500 9zM8.500 5v8L13 9z" fill={L} /></Ico>
          <div className={bar + " ml-[3px]"} />
          <Field className="-mt-px w-[70px] shrink-0">0</Field>
          <div className={bar + " ml-px"} />
          <Ico w={22} h={20}><circle cx="10" cy="8" r="5.500" fill={L} /><path d="M10 4v4.500h3" stroke="#444" strokeWidth="1.300" /><circle cx="15" cy="13" r="5" fill="#444" /><circle cx="15" cy="13" r="3" stroke={O} strokeWidth="1.600" /><circle cx="15" cy="13" r="4.200" stroke={O} strokeWidth="1.200" strokeDasharray="1.600 1.700" /></Ico>
        </div>
      </div>
      <div className="flex shrink-0 pt-[2px]">
        <Btn className="mt-px h-[44px] w-[43px]">
          <svg width="34" height="34" viewBox="0 0 34 34" fill="none">
            <path d="M13 4h6v10h9v5h-9v10h-6V19H4v-5h9z" fill={L} stroke={S} />
            <circle cx="20" cy="26.500" r="3.400" stroke={S} strokeWidth="4" /><path d="M22 24l8-7M26 20l3 3" stroke={S} strokeWidth="4" />
            <circle cx="20" cy="26.500" r="3" stroke={T} strokeWidth="2" /><path d="M22 24l8-7M26 20.500l2.500 2.500" stroke={T} strokeWidth="2" />
          </svg>
        </Btn>
        <div className="mt-px ml-[3px] flex flex-col gap-[2px]">
          <Btn tall className="h-[21px] w-[48px] tracking-normal">Auto Key</Btn>
          <Btn tall className="h-[21px] w-[48px] tracking-normal">Set Key</Btn>
        </div>
        <div className="mt-px ml-[3px] flex flex-col">
          <Drop className="h-[21px] w-[116px] pr-[6px] pl-[5px]">Selected</Drop>
          <div className="mt-[2px] flex">
            <Ico w={26} h={22}><path d="M4 18c3-3 4-9 3-12M17 18c-3-3-4-9-3-12" stroke={T} strokeWidth="2.200" /><path d="M3 4h3M15 4h3" stroke={L} strokeWidth="2" /><path d="M8.500 2h4v4h-4z" fill="#444" stroke={L} /><path d="M21 15v4h-4z" fill="#e6e6e6" /></Ico>
            <Btn tall className="h-[21px] w-[90px] text-[11.4px]"><span className="pt-px">Key Filters...</span></Btn>
          </div>
        </div>
      </div>
      <div className="mt-[4px] ml-[7px] grid h-[44px] shrink-0 grid-cols-[23px_23px_24px_24px] grid-rows-[22px_22px]">
        <Ico w={23} h={22}><circle cx="13" cy="9" r="4.500" stroke={L} strokeWidth="1.900" /><path d="M10 12l-5 5" stroke={L} strokeWidth="2.500" /></Ico>
        <Ico w={23} h={22}><path d="M9 3h4v5H9zM14 3h5v4h-5zM14 8h5v6h-5z" fill={T} /><circle cx="11.500" cy="9.500" r="3.500" fill="#444" stroke={L} strokeWidth="1.600" /><path d="M9 12l-5 5" stroke={L} strokeWidth="2.200" /></Ico>
        <Ico w={24} h={22}><path d="M5 7V4h3M16 4h3v3M5 14v3h3" stroke={L} strokeWidth="1.300" /><path d="M12 5l5 2.500v6L12 16l-5-2.500v-6z" fill={T} /><path d="M7 7.500l5 2.500 5-2.500" stroke="#2e6e6e" /><path d="M23 15v4h-4z" fill="#e6e6e6" /></Ico>
        <Ico w={24} h={22}><path d="M12 5l3-2 3 2v8l-3 2-3-2z" fill={T} /><path d="M2 11l3.500-2L9 11l-3.500 2zM6 15l3-2 3 2-3 2zM8 9l2-1v4l-2 1z" fill={L} /><path d="M22 15v4h-4z" fill="#e6e6e6" /></Ico>
        <Ico w={23} h={22}><path d="M5 3.500h14v11h-5" stroke={L} strokeWidth="1.400" strokeDasharray="2.500 1.500" /><circle cx="12" cy="9" r="4" stroke={T} strokeWidth="1.600" /><path d="M9 12l-4 4" stroke={T} strokeWidth="2.200" /></Ico>
        <Ico w={23} h={22}><path d="M8 11V5.500c0-1 1.500-1 1.700 0V3.700c0-1 1.700-1 1.700 0v-.5c0-1 1.700-1 1.700 0v1c0-1 1.700-1 1.700 0V11l1-1.500c1-1 2 0 1.500 1L14 17H9.500L5.500 11c-.5-1.200 1-2 2-.8z" fill={L} /><path d="M21 15v4h-4z" fill="#e6e6e6" /></Ico>
        <Ico w={24} h={22}><ellipse cx="12" cy="9" rx="7.500" ry="3.600" transform="rotate(-45 12 9)" stroke={T} strokeWidth="1.600" /><circle cx="12" cy="8.500" r="4.500" fill={L} /><path d="M7 14c5 0 9-5 10-9" stroke="#444" strokeWidth="2.600" /><path d="M6 14.500c5 0 10-5 11-10" stroke={T} strokeWidth="1.300" /><path d="M23 15v4h-4z" fill="#e6e6e6" /></Ico>
        <Ico w={24} h={22}><path d="M4 3h14v13H4z" fill={L} /><path d="M5 11h4v4H5z" fill="#444" /><path d="M9 11l6-6M11 5h4v4" stroke={S} strokeWidth="1.500" /></Ico>
      </div>
    </div>
  );
}

export default function App() {
  return (
    <div className="flex h-[704px] w-[1366px] flex-col overflow-hidden bg-[#444] font-['DejaVu_Sans_Condensed','DejaVu_Sans',sans-serif] text-[11px] leading-none tracking-[-.2px] whitespace-nowrap text-[#e6e6e6] [font-stretch:condensed]">
      <MenuBar />
      <Toolbar />
      <Ribbon />
      <div className="flex h-[497px] shrink-0">
        <div className="flex w-[268px] shrink-0 flex-col">
          <div className="flex h-[10px] gap-[8px] pt-[3px] pl-[2px]">
            <GripH className="w-[71px]" />
            <GripH className="w-[182px]" />
          </div>
          <div className="flex">
            <div className="flex h-[487px] w-[40px] flex-col justify-end bg-[linear-gradient(90deg,#2c2c2c,#303030_85%,#222)]">
              <div className="ml-[10px] flex h-[20px] w-[20px] items-center justify-center rounded-[3px] border border-[#5a5a5a] bg-[#464646]">
                <svg width="6" height="9" viewBox="0 0 6 9"><path d="M0 0l6 4.500L0 9z" fill="#e8e8e8" /></svg>
              </div>
              <div className="mt-[10px] mb-[2px] ml-[4px] flex h-[44px] items-center rounded-l-[4px] bg-[linear-gradient(#4a6284,#3b7bd0)] pl-[3px]">
                <div className="h-[29px] w-[31px] rounded-[2px] border border-[#23303f] bg-[linear-gradient(#565660,#5a6e86)]" />
              </div>
            </div>
            <div className="ml-[39px]"><Explorer /></div>
          </div>
        </div>
        <Viewport />
        <CommandPanel />
      </div>
      <Timeline />
      <StatusBar />
    </div>
  );
}
